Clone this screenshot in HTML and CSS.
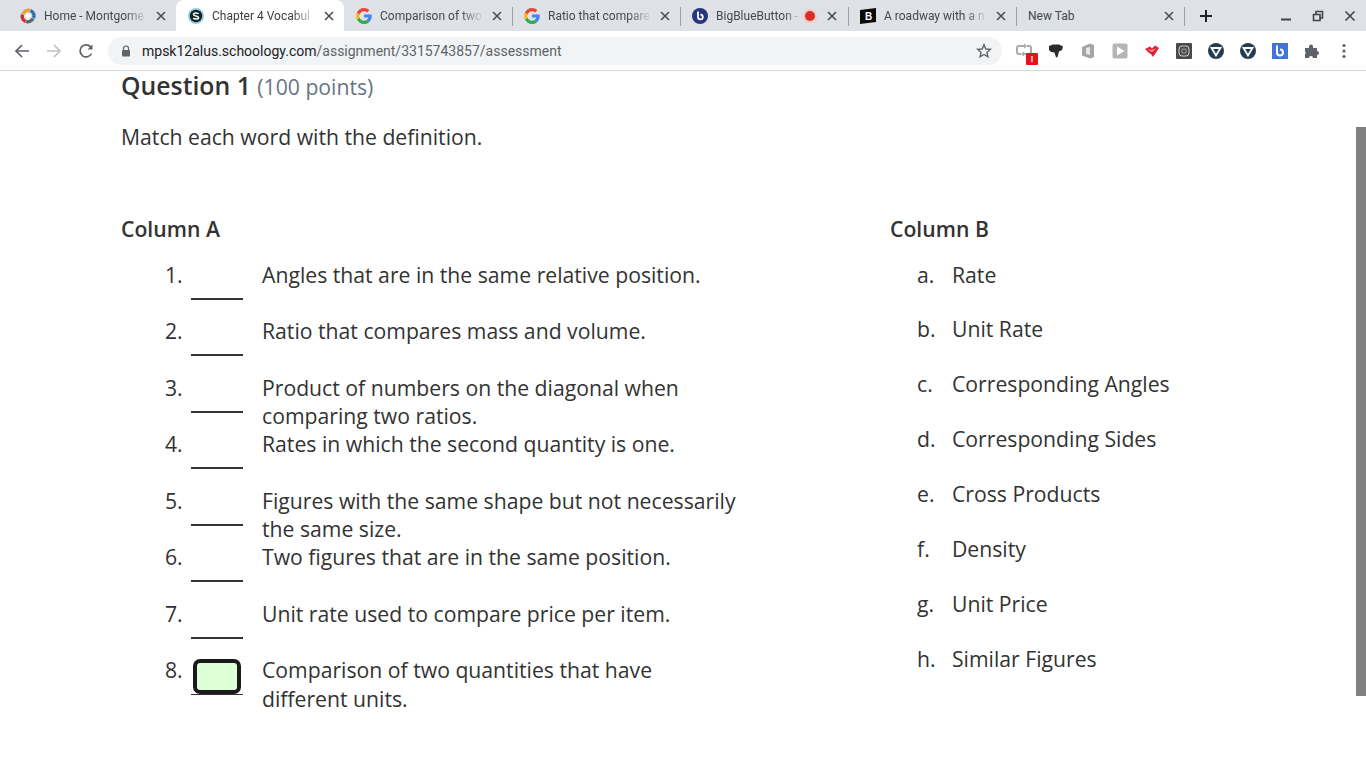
FILE: index.html
```html
<!DOCTYPE html>
<html lang="en">
<head>
    <meta charset="UTF-8">
    <title>Chapter 4 Vocabulary</title>
    <link rel="stylesheet" href="styles.css">
</head>
<body>
    <div class="tabbar">
        <div class="tab">
            <svg class="favicon" viewBox="0 0 16 16"><g fill="none" stroke-width="3.4"><path d="M3 6 A5.8 5.8 0 0 1 10 2.5" stroke="#e8a13c"/><path d="M10.5 2.5 A5.8 5.8 0 0 1 13.5 10" stroke="#2f6fb5"/><path d="M13 10.5 A5.8 5.8 0 0 1 6 13.5" stroke="#5c6470"/><path d="M5.5 13.5 A5.8 5.8 0 0 1 2.5 6.5" stroke="#c8322e"/></g><path d="M8 5 L11 8 L8 11 L5 8Z" fill="#fff"/></svg>
            <span class="tab-title">Home - Montgome</span>
            <svg class="tab-close" viewBox="0 0 10 10"><use href="#close-x"/></svg>
        </div>
        <div class="tab active">
            <svg class="favicon" viewBox="0 0 16 16"><circle cx="8" cy="8" r="8" fill="#8fd0dc"/><circle cx="8" cy="8" r="6.2" fill="#15232b"/><path d="M10.6 6 C10 4.6 5.6 4.4 5.5 6.4 C5.4 8.4 10.6 7.6 10.6 9.7 C10.6 11.6 6 11.4 5.3 9.9" fill="none" stroke="#fff" stroke-width="1.5"/></svg>
            <span class="tab-title">Chapter 4 Vocabul</span>
            <svg class="tab-close" viewBox="0 0 10 10"><use href="#close-x"/></svg>
        </div>
        <div class="tab sep">
            <svg class="favicon" viewBox="0 0 16 16"><use href="#g-logo"/></svg>
            <span class="tab-title">Comparison of two</span>
            <svg class="tab-close" viewBox="0 0 10 10"><use href="#close-x"/></svg>
        </div>
        <div class="tab sep">
            <svg class="favicon" viewBox="0 0 16 16"><use href="#g-logo"/></svg>
            <span class="tab-title">Ratio that compare</span>
            <svg class="tab-close" viewBox="0 0 10 10"><use href="#close-x"/></svg>
        </div>
        <div class="tab sep">
            <svg class="favicon" viewBox="0 0 16 16"><circle cx="8" cy="8" r="8" fill="#27367f"/><path d="M6 3.5 V9 A2.4 2.4 0 1 0 8.4 6.6" fill="none" stroke="#fff" stroke-width="1.8"/></svg>
            <span class="tab-title short">BigBlueButton -</span>
            <svg class="rec" viewBox="0 0 16 16"><circle cx="8" cy="8" r="7" fill="#f6c9c4"/><circle cx="8" cy="8" r="5" fill="#d93025"/></svg>
            <svg class="tab-close" viewBox="0 0 10 10"><use href="#close-x"/></svg>
        </div>
        <div class="tab sep">
            <svg class="favicon" viewBox="0 0 16 16"><path d="M0 2 L16 0 V14 L0 16Z" fill="#0b0b0b"/><text x="5" y="12" class="fav-letter">B</text></svg>
            <span class="tab-title">A roadway with a n</span>
            <svg class="tab-close" viewBox="0 0 10 10"><use href="#close-x"/></svg>
        </div>
        <div class="tab sep newtab">
            <span class="tab-title plain">New Tab</span>
            <svg class="tab-close" viewBox="0 0 10 10"><use href="#close-x"/></svg>
        </div>
        <div class="tab-end">
            <svg class="plus" viewBox="0 0 14 14"><path d="M7 1 V13 M1 7 H13" stroke="#222" stroke-width="2"/></svg>
        </div>
        <div class="window-btns">
            <svg viewBox="0 0 12 12"><path d="M1 9.5 H11" stroke="#444" stroke-width="2"/></svg>
            <svg viewBox="0 0 12 12"><path d="M1.5 4.5 H8 V10.5 H1.5Z M4 4 V1.5 H10.5 V8 H8" fill="none" stroke="#444" stroke-width="1.6"/></svg>
            <svg viewBox="0 0 12 12"><path d="M1.5 1.5 L10.5 10.5 M10.5 1.5 L1.5 10.5" stroke="#444" stroke-width="1.6"/></svg>
        </div>
    </div>

    <div class="toolbar">
        <svg class="nav" viewBox="0 0 16 16"><path d="M15 8 H2 M8 2 L2 8 L8 14" fill="none" stroke="#5f6368" stroke-width="1.7"/></svg>
        <svg class="nav" viewBox="0 0 16 16"><path d="M1 8 H14 M8 2 L14 8 L8 14" fill="none" stroke="#bfc2c6" stroke-width="1.7"/></svg>
        <svg class="nav" viewBox="0 0 16 16"><path d="M13.5 10.5 A6 6 0 1 1 13 4.5" fill="none" stroke="#5f6368" stroke-width="1.7"/><path d="M14.5 1.5 V6.5 H9.5Z" fill="#5f6368"/></svg>
        <div class="omnibox">
            <svg class="lock" viewBox="0 0 10 12"><path d="M2.5 5 V3.5 A2.5 2.5 0 0 1 7.5 3.5 V5" fill="none" stroke="#5f6368" stroke-width="1.2"/><rect x="1" y="5" width="8" height="6.5" rx="1" fill="#5f6368"/></svg>
            <span class="url">mpsk12alus.schoology.com<span class="url-path">/assignment/3315743857/assessment</span></span>
            <svg class="star" viewBox="0 0 16 16"><path d="M8 1.8 L9.8 6 L14.3 6.4 L10.9 9.4 L11.9 13.9 L8 11.5 L4.1 13.9 L5.1 9.4 L1.7 6.4 L6.2 6Z" fill="none" stroke="#5f6368" stroke-width="1.4"/></svg>
        </div>
        <div class="extensions">
            <div class="ext">
                <svg viewBox="0 0 16 16"><path d="M8 3 H3 A2 2 0 0 0 1 5 V9 A2 2 0 0 0 3 11 H5 M8 11 H13 A2 2 0 0 0 15 9 V5 A2 2 0 0 0 13 3 H11" fill="none" stroke="#a9a9a9" stroke-width="2"/><path d="M8 0.5 L11 3 L8 5.5Z M8 8.5 L5 11 L8 13.5Z" fill="#a9a9a9"/></svg>
                <span class="ext-badge">!</span>
            </div>
            <div class="ext"><svg viewBox="0 0 16 16"><path d="M1 3 L5 1.5 H11 L15 3.5 L14 7 L11 8.5 L9.5 14 L8 14.5 L6.5 9.5 L3 9 L1 7Z" fill="#2b2b2b"/></svg></div>
            <div class="ext"><svg viewBox="0 0 16 16"><path d="M2 4 L10 0.5 L14 2 V14 L10 15.5 L2 12.5Z" fill="#a5a5a5"/><path d="M6 5 L10 4 V12 L6 11Z" fill="#e6e6e6"/></svg></div>
            <div class="ext"><svg viewBox="0 0 16 16"><rect x="0.5" y="0.5" width="15" height="15" rx="2" fill="#b5b5b5"/><path d="M5 3.5 L12.5 8 L5 12.5Z" fill="#fff"/></svg></div>
            <div class="ext"><svg viewBox="0 0 16 16"><path d="M1 6 L6 3.5 L8 5.5 L11 2.5 L15 5 L9 14 L7 11 L5 10Z" fill="#e0202c"/><path d="M3.5 6.5 L8 9 L12.5 5.5 L8 7Z" fill="#f7b0b3"/></svg></div>
            <div class="ext"><svg viewBox="0 0 16 16"><rect width="16" height="16" rx="1" fill="#4a4a4a"/><rect x="3" y="3" width="10" height="10" rx="3" fill="none" stroke="#cfcfcf" stroke-width="1"/><path d="M6 6 H10 V10 H6Z" fill="none" stroke="#9a9a9a"/></svg></div>
            <div class="ext"><svg viewBox="0 0 16 16"><use href="#shield"/></svg></div>
            <div class="ext"><svg viewBox="0 0 16 16"><use href="#shield"/></svg></div>
            <div class="ext"><svg viewBox="0 0 16 16"><rect width="16" height="16" fill="#4173d9"/><path d="M5 2.5 V9.5 A3 3 0 1 0 8 6.5" fill="none" stroke="#fff" stroke-width="2"/></svg></div>
            <div class="ext"><svg viewBox="0 0 16 16"><path d="M1 5 H5 V3.5 A2 2 0 0 1 9 3.5 V5 H13 V8 A2 2 0 0 1 13 12 V15 H9 A2 2 0 0 0 5 15 H1 V11.5 A2 2 0 0 0 1 8.5Z" fill="#5f6368"/></svg></div>
            <div class="ext"><svg viewBox="0 0 16 16"><circle cx="8" cy="2.5" r="1.6" fill="#5f6368"/><circle cx="8" cy="8" r="1.6" fill="#5f6368"/><circle cx="8" cy="13.5" r="1.6" fill="#5f6368"/></svg></div>
        </div>
    </div>

    <main class="page">
        <h2 class="question">Question 1 <span class="points">(100 points)</span></h2>
        <p class="prompt">Match each word with the definition.</p>

        <div class="columns">
            <section class="col-a">
                <h3 class="col-title">Column A</h3>
                <ol class="match-list">
                    <li class="match-row"><span class="num">1.</span><span class="blank"></span><span class="def">Angles that are in the same relative position.</span></li>
                    <li class="match-row"><span class="num">2.</span><span class="blank"></span><span class="def">Ratio that compares mass and volume.</span></li>
                    <li class="match-row"><span class="num">3.</span><span class="blank"></span><span class="def">Product of numbers on the diagonal when comparing two ratios.</span></li>
                    <li class="match-row"><span class="num">4.</span><span class="blank"></span><span class="def">Rates in which the second quantity is one.</span></li>
                    <li class="match-row"><span class="num">5.</span><span class="blank"></span><span class="def">Figures with the same shape but not necessarily the same size.</span></li>
                    <li class="match-row"><span class="num">6.</span><span class="blank"></span><span class="def">Two figures that are in the same position.</span></li>
                    <li class="match-row"><span class="num">7.</span><span class="blank"></span><span class="def">Unit rate used to compare price per item.</span></li>
                    <li class="match-row"><span class="num">8.</span><span class="blank focused"><span class="blank-input"></span></span><span class="def">Comparison of two quantities that have different units.</span></li>
                </ol>
            </section>
            <section class="col-b">
                <h3 class="col-title">Column B</h3>
                <ol class="choice-list">
                    <li class="choice-row"><span class="letter">a.</span><span>Rate</span></li>
                    <li class="choice-row"><span class="letter">b.</span><span>Unit Rate</span></li>
                    <li class="choice-row"><span class="letter">c.</span><span>Corresponding Angles</span></li>
                    <li class="choice-row"><span class="letter">d.</span><span>Corresponding Sides</span></li>
                    <li class="choice-row"><span class="letter">e.</span><span>Cross Products</span></li>
                    <li class="choice-row"><span class="letter">f.</span><span>Density</span></li>
                    <li class="choice-row"><span class="letter">g.</span><span>Unit Price</span></li>
                    <li class="choice-row"><span class="letter">h.</span><span>Similar Figures</span></li>
                </ol>
            </section>
        </div>
        <div class="scroll-thumb"></div>
    </main>

    <svg class="defs" width="0" height="0">
        <defs>
            <path id="close-x" d="M1 1 L9 9 M9 1 L1 9" stroke="#45484c" stroke-width="1.5"/>
            <g id="g-logo">
                <path d="M15.7 8.2 C15.7 7.6 15.6 7 15.5 6.5 H8 V9.5 H12.3 C12.1 10.5 11.5 11.3 10.7 11.9 L13.2 13.9 C14.7 12.5 15.7 10.5 15.7 8.2Z" fill="#4285f4"/>
                <path d="M8 16 C10.2 16 12 15.3 13.2 13.9 L10.7 11.9 C10 12.4 9.1 12.7 8 12.7 C5.9 12.7 4.1 11.3 3.5 9.4 L0.9 11.4 C2.2 14.1 4.9 16 8 16Z" fill="#34a853"/>
                <path d="M3.5 9.4 C3.2 8.5 3.2 7.5 3.5 6.6 L0.9 4.6 C-0.2 6.7 -0.2 9.3 0.9 11.4Z" fill="#fbbc05"/>
                <path d="M8 3.3 C9.2 3.3 10.2 3.7 11 4.5 L13.3 2.2 C11.9 0.8 10.1 0 8 0 C4.9 0 2.2 1.9 0.9 4.6 L3.5 6.6 C4.1 4.7 5.9 3.3 8 3.3Z" fill="#ea4335"/>
            </g>
            <g id="shield">
                <circle cx="8" cy="8" r="8" fill="#253c50"/>
                <path d="M3.5 5 H12.5 L8 12.5Z" fill="none" stroke="#fff" stroke-width="1.8"/>
            </g>
        </defs>
    </svg>
</body>
</html>
```

FILE: styles.css
```css
:root {
    --chrome-bg: #dee1e6;
    --chrome-text: #45484c;
    --text: #333;
    --muted: #677583;
}

* {
    box-sizing: border-box;
}

html, body {
    height: 100%;
}

body {
    margin: 0;
    display: flex;
    flex-direction: column;
    overflow: hidden;
    background: #fff;
    color: var(--text);
    font-family: "Open Sans", sans-serif;
}

.defs {
    position: absolute;
}

/* tab strip */
.tabbar {
    height: 31px;
    flex: none;
    display: flex;
    padding-left: 8px;
    background: var(--chrome-bg);
    font-family: Roboto, sans-serif;
    font-size: 12px;
    color: var(--chrome-text);
}

.tab {
    position: relative;
    width: 168px;
    height: 31px;
    display: flex;
    align-items: center;
    padding-left: 12px;
}

.tab.sep::before, .tab-end::before {
    content: "";
    position: absolute;
    left: 0;
    top: 7px;
    height: 19px;
    width: 1px;
    background: #9da1a6;
}

.tab.active {
    background: #fff;
    border-radius: 8px 8px 0 0;
    color: #3c4043;
}

.tab.active + .tab::before {
    display: none;
}

.favicon {
    width: 16px;
    height: 16px;
    flex: none;
    margin-right: 8px;
}

.fav-letter {
    font-family: "Liberation Sans", sans-serif;
    font-weight: bold;
    font-size: 10px;
    fill: #fff;
}

.tab-title {
    width: 106px;
    white-space: nowrap;
    overflow: hidden;
    -webkit-mask-image: linear-gradient(to right, #000 76%, transparent 98%);
    mask-image: linear-gradient(to right, #000 76%, transparent 98%);
}

.tab-title.short {
    width: 86px;
    -webkit-mask-image: linear-gradient(to right, #000 80%, transparent 100%);
    mask-image: linear-gradient(to right, #000 80%, transparent 100%);
}

.tab-title.plain {
    width: 130px;
    -webkit-mask-image: none;
    mask-image: none;
}

.rec {
    width: 16px;
    height: 16px;
    flex: none;
    margin-right: 9px;
}

.tab-close {
    width: 10px;
    height: 10px;
    margin-left: 6px;
    flex: none;
}

.rec + .tab-close {
    margin-left: 0;
}

.tab-end {
    position: relative;
    width: 44px;
    display: flex;
    align-items: center;
    padding-left: 15px;
}

.plus {
    width: 14px;
    height: 14px;
}

.window-btns {
    margin-left: auto;
    display: flex;
    align-items: center;
    gap: 20px;
    padding-right: 10px;
}

.window-btns svg {
    width: 12px;
    height: 12px;
}

/* address bar */
.toolbar {
    height: 40px;
    flex: none;
    display: flex;
    align-items: center;
    padding-left: 14px;
    gap: 16px;
    border-bottom: 1px solid #d5d6d8;
    background: #fff;
}

.nav {
    width: 16px;
    height: 16px;
    flex: none;
}

.omnibox {
    width: 894px;
    height: 28px;
    margin-left: -2px;
    display: flex;
    align-items: center;
    padding-left: 13px;
    border-radius: 14px;
    background: #f1f3f4;
    font-family: Roboto, sans-serif;
    font-size: 14px;
    color: #202124;
}

.lock {
    width: 10px;
    height: 12px;
    margin-right: 11px;
}

.url-path {
    color: #5f6368;
}

.star {
    width: 16px;
    height: 16px;
    margin-left: auto;
    margin-right: 10px;
}

.extensions {
    display: flex;
    margin-left: -2px;
    gap: 16px;
}

.ext {
    position: relative;
    width: 16px;
    height: 16px;
}

.ext svg {
    display: block;
    width: 16px;
    height: 16px;
}

.ext-badge {
    position: absolute;
    right: -6px;
    bottom: -6px;
    width: 12px;
    height: 12px;
    background: #e8101a;
    border-radius: 1px;
    color: #fff;
    font: bold 9px/12px "Liberation Sans", sans-serif;
    text-align: center;
}

/* assessment */
.page {
    position: relative;
    flex: 1;
    padding-left: 121px;
    font-size: 21.2px;
    line-height: 28.5px;
}

.question {
    margin: 0;
    font-size: 24.8px;
    line-height: 28px;
    font-weight: 600;
}

.points {
    font-size: 21.2px;
    font-weight: 400;
    color: var(--muted);
}

.prompt {
    margin: 22px 0 0;
}

.columns {
    display: flex;
    margin-top: 62px;
}

.col-a {
    width: 769px;
    flex: none;
}

.col-title {
    margin: 0;
    font-size: 21.2px;
    line-height: 30px;
    font-weight: 600;
}

.match-list, .choice-list {
    list-style: none;
    margin: 0;
    padding: 0;
}

.match-list {
    margin-top: 17px;
    padding-left: 44px;
}

.match-row {
    display: flex;
    height: 56.5px;
}

.num {
    width: 26px;
    flex: none;
}

.blank {
    position: relative;
    width: 52px;
    height: 39px;
    flex: none;
    border-bottom: 2px solid #333;
}

.blank.focused {
    border-bottom-width: 1px;
}

.blank-input {
    position: absolute;
    left: 2px;
    right: 2px;
    top: 3px;
    height: 35px;
    background: #dfffd6;
    border: 4px solid #1a1a1a;
    border-radius: 7px;
}

.def {
    width: 480px;
    margin-left: 19px;
    flex: none;
}

.choice-list {
    margin-top: 17px;
    padding-left: 27px;
}

.choice-row {
    display: flex;
    height: 54.9px;
}

.letter {
    width: 35px;
    flex: none;
}

.scroll-thumb {
    position: absolute;
    right: 0;
    top: 56px;
    width: 10px;
    height: 569px;
    background: #808080;
}
```
